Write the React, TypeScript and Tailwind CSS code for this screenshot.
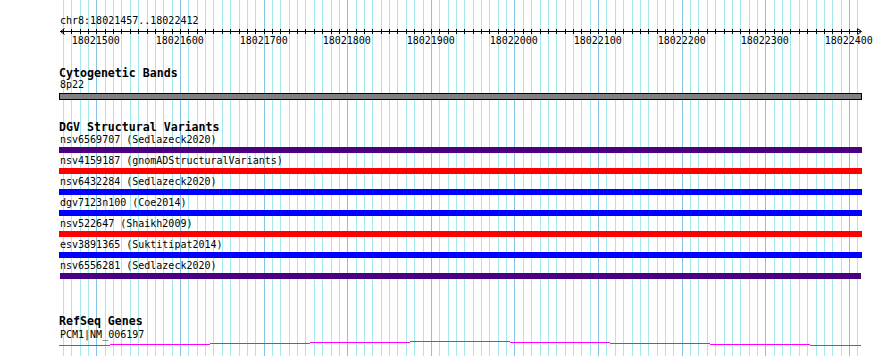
import React from "react";

const START_LINE = 18021460;
const px = (bp: number) => Math.round(96.4 + (bp - 18021500) * 0.83618);

const gridBps: number[] = [];
for (let bp = START_LINE; bp <= 18022410; bp += 10) gridBps.push(bp);
const majorBps = gridBps.filter((b) => b % 100 === 0);

function Grid() {
  return (
    <svg className="absolute inset-0" width={890} height={356} viewBox="0 0 890 356">
      {gridBps.map((bp) => {
        const x = px(bp) + 0.5;
        const major = bp % 100 === 0;
        return (
          <line
            key={bp}
            x1={x}
            x2={x}
            y1={0}
            y2={356}
            stroke={major ? "#86c2e4" : "#a4e8f0"}
            strokeWidth={1}
          />
        );
      })}
    </svg>
  );
}

function Ruler() {
  return (
    <svg width={831} height={20} viewBox="59 27 831 20" className="block">
      <line x1={60} x2={861} y1={31.5} y2={31.5} stroke="#000" strokeWidth={1} />
      <polyline points="64.5,28.5 60.5,31.5 64.5,34.5" fill="none" stroke="#000" strokeWidth={1} />
      <polyline points="857.5,28.5 861.5,31.5 857.5,34.5" fill="none" stroke="#000" strokeWidth={1} />
      {gridBps.map((bp) => {
        const x = px(bp) + 0.5;
        return <line key={bp} x1={x} x2={x} y1={29} y2={34} stroke="#000" strokeWidth={1} />;
      })}
      {majorBps.map((bp) => (
        <text
          key={bp}
          x={px(bp) - 0.2}
          y={43.6}
          textAnchor="middle"
          fontSize={10}
          fill="#000"
          fontFamily="'DejaVu Sans Mono', monospace"
        >
          {bp}
        </text>
      ))}
    </svg>
  );
}

function GeneLine() {
  const segs: [number, number, number][] = [
    [59, 110, 345],
    [110, 210, 344],
    [210, 310, 343],
    [310, 410, 342],
    [410, 510, 341],
    [510, 610, 342],
    [610, 710, 343],
    [710, 810, 344],
    [810, 861, 345],
  ];
  return (
    <svg width={803} height={6} viewBox="59 341 803 6" className="block">
      {segs.map(([a, b, y]) => (
        <line key={a} x1={a} x2={b} y1={y + 0.5} y2={y + 0.5} stroke="#ff00ff" strokeWidth={1} />
      ))}
    </svg>
  );
}

const variants: { label: string; color: string; last?: boolean }[] = [
  { label: "nsv6569707 (Sedlazeck2020)", color: "bg-[#4b0082]" },
  { label: "nsv4159187 (gnomADStructuralVariants)", color: "bg-[#ff0000]" },
  { label: "nsv6432284 (Sedlazeck2020)", color: "bg-[#0000ff]" },
  { label: "dgv7123n100 (Coe2014)", color: "bg-[#0000ff]" },
  { label: "nsv522647 (Shaikh2009)", color: "bg-[#ff0000]" },
  { label: "esv3891365 (Suktitipat2014)", color: "bg-[#0000ff]" },
  { label: "nsv6556281 (Sedlazeck2020)", color: "bg-[#4b0082]", last: true },
];

export default function App() {
  return (
    <div className="relative w-[890px] h-[356px] overflow-hidden bg-white text-black font-['DejaVu_Sans_Mono',monospace]">
      <Grid />
      <div className="relative flex flex-col pl-[59px] pt-[15px]">
        <div className="h-[12px] pl-[1px] text-[10px] leading-[12px] whitespace-nowrap">chr8:18021457..18022412</div>
        <Ruler />
        <div className="mt-[20px] h-[12px] text-[11.6px] font-bold leading-[12px] whitespace-nowrap">Cytogenetic Bands</div>
        <div className="h-[12px] pl-[1px] text-[10px] leading-[12px]">8p22</div>
        <div className="mt-[2px] h-[7px] w-[803px] border border-black bg-[#808080]" />
        <div className="mt-[21px] h-[12px] text-[11.6px] font-bold leading-[12px] whitespace-nowrap">DGV Structural Variants</div>
        {variants.map((v, i) => (
          <div key={i} className={i === 0 ? "mt-[1px] flex flex-col" : "mt-[2px] flex flex-col"}>
            <div className="h-[12px] pl-[1px] text-[10px] leading-[12px] whitespace-nowrap">{v.label}</div>
            <div className={`mt-[1px] h-[6px] ${v.last ? "ml-[1px] w-[801px]" : "w-[803px]"} ${v.color}`} />
          </div>
        ))}
        <div className="mt-[36px] h-[12px] text-[11.6px] font-bold leading-[12px] whitespace-nowrap">RefSeq Genes</div>
        <div className="mt-[2px] h-[12px] pl-[1px] text-[10px] leading-[12px] whitespace-nowrap">PCM1|NM_006197</div>
        <GeneLine />
      </div>
    </div>
  );
}
